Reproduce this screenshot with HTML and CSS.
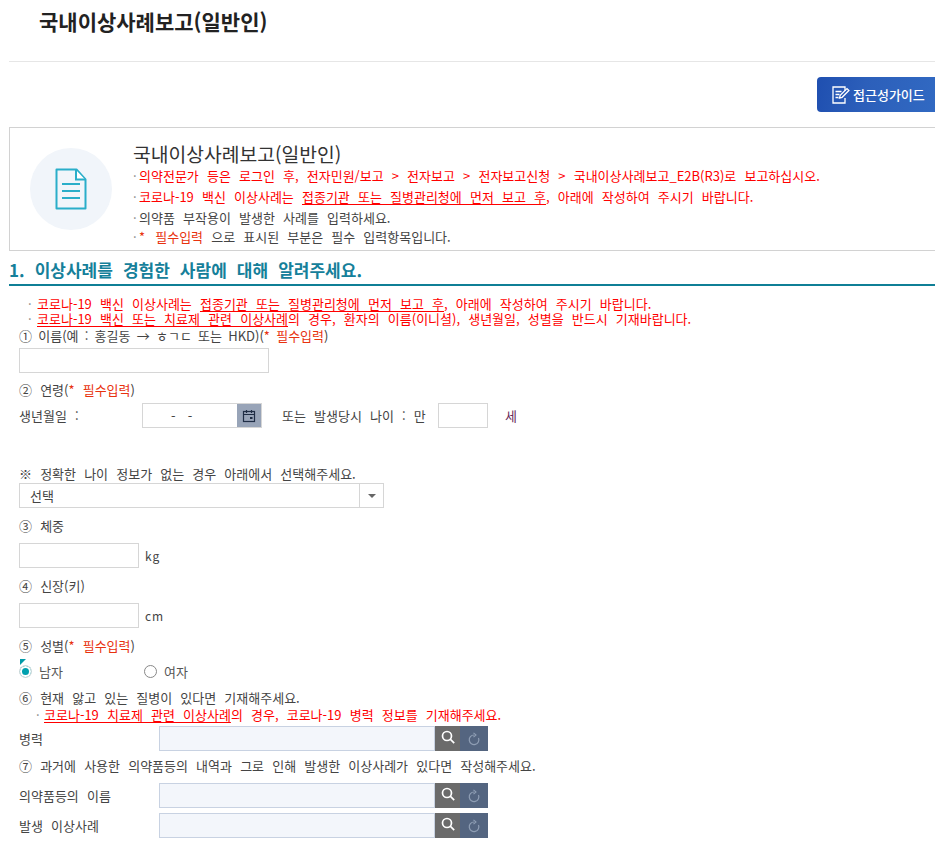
FILE: index.html
```
<!DOCTYPE html>
<html lang="ko">
<head>
<meta charset="utf-8">
<title>국내이상사례보고(일반인)</title>
<link rel="stylesheet" href="styles.css">
</head>
<body>
<div class="page">
  <header class="top"><h1>국내이상사례보고(일반인)</h1></header>
  <div class="tools">
    <a class="guide">
      <svg class="guide-icon" viewBox="0 0 20 20" width="20" height="20" fill="none" stroke="#fff" stroke-width="1.3"><path d="M14 6V2H2v16h12v-5"/><path d="M4.500 6.500h6M4.500 9.500h4M4.500 12.500h3"/><path d="M8.500 13l.7-2.600 6.800-6.800 1.900 1.900-6.800 6.800z"/></svg>
      <span>접근성가이드</span>
    </a>
  </div>
  <section class="intro">
    <div class="intro-circle">
      <svg viewBox="0 0 32 42" width="32" height="42" fill="none" stroke="#2aaec9" stroke-width="2"><path d="M1.500 1.500h20l9 10v29h-29z" stroke-linejoin="round"/><path d="M21 2v9.500h9" fill="#fff"/><path d="M7 16h18M7 23h18M7 30h18" stroke-width="2.200"/></svg>
    </div>
    <div class="intro-body">
      <h2>국내이상사례보고(일반인)</h2>
      <p class="il red"><i>·</i>의약전문가 등은 로그인 후, 전자민원/보고 &gt; 전자보고 &gt; 전자보고신청 &gt; 국내이상사례보고_E2B(R3)로 보고하십시오.</p>
      <p class="il red"><i>·</i>코로나-19 백신 이상사례는 <u>접종기관 또는 질병관리청에 먼저 보고 후</u>, 아래에 작성하여 주시기 바랍니다.</p>
      <p class="il"><i>·</i>의약품 부작용이 발생한 사례를 입력하세요.</p>
      <p class="il il-last"><i>·</i><b class="req"><span class="star">*</span> 필수입력</b> 으로 표시된 부분은 필수 입력항목입니다.</p>
    </div>
  </section>
  <h3 class="sec">1. 이상사례를 경험한 사람에 대해 알려주세요.</h3>
  <div class="form">
    <p class="note red n1"><i>·</i>코로나-19 백신 이상사례는 <u>접종기관 또는 질병관리청에 먼저 보고 후</u>, 아래에 작성하여 주시기 바랍니다.</p>
    <p class="note red n2"><i>·</i><u>코로나-19 백신 또는 치료제 관련 이상사례</u>의 경우, 환자의 이름(이니셜), 생년월일, 성별을 반드시 기재바랍니다.</p>
    <p class="lab l1">① 이름(예 : 홍길동 → ㅎㄱㄷ 또는 HKD)(<b class="req">* 필수입력</b>)</p>
    <input class="inp name" type="text" aria-label="이름">
    <p class="lab l2">② 연령(<b class="req">* 필수입력</b>)</p>
    <div class="birth">
      <span class="birth-lab">생년월일 :</span>
      <div class="date"><span class="date-val">- -</span><span class="date-btn">
        <svg viewBox="0 0 14 14" width="14" height="14" fill="none" stroke="#1f2d45" stroke-width="1.200"><rect x="1.500" y="2.500" width="11" height="10"/><path d="M1.500 5.500h11M4.500 1v3M9.500 1v3"/><rect x="8" y="8" width="2.500" height="2" fill="#1f2d45" stroke="none"/></svg></span></div>
      <span class="age-lab">또는 발생당시 나이 : 만</span>
      <input class="inp age" type="text" aria-label="나이">
      <span class="age-unit">세</span>
    </div>
    <p class="lab l3">※ 정확한 나이 정보가 없는 경우 아래에서 선택해주세요.</p>
    <div class="sel"><span class="sel-val">선택</span><span class="sel-arrow"></span></div>
    <p class="lab l4">③ 체중</p>
    <div class="unit-row"><input class="inp short" type="text" aria-label="체중"><span>kg</span></div>
    <p class="lab l5">④ 신장(키)</p>
    <div class="unit-row"><input class="inp short" type="text" aria-label="신장"><span>cm</span></div>
    <p class="lab l5">⑤ 성별(<b class="req">* 필수입력</b>)</p>
    <div class="gender">
      <span class="tri"></span>
      <label class="opt"><span class="radio on"></span>남자</label>
      <label class="opt"><span class="radio"></span>여자</label>
    </div>
    <p class="lab l6">⑥ 현재 앓고 있는 질병이 있다면 기재해주세요.</p>
    <p class="note red n3"><i>·</i><u>코로나-19 치료제 관련 이상사례</u>의 경우, 코로나-19 병력 정보를 기재해주세요.</p>
    <div class="srch s1"><span class="srch-lab">병력</span><div class="srch-in"></div><span class="b-find"><svg viewBox="0 0 14 14" width="14" height="14" fill="none" stroke="#fff" stroke-width="1.700"><circle cx="6" cy="6" r="4.500"/><path d="M9.200 9.200l4 4"/></svg></span><span class="b-reset"><svg viewBox="0 0 14 14" width="14" height="14" fill="none" stroke="#8f9eb4" stroke-width="1.200"><path d="M7 3a4.800 4.800 0 1 0 4.500 3"/><path d="M6.500 .8L9 3 6.500 5.200" stroke-width="1.100"/></svg></span></div>
    <p class="lab l7">⑦ 과거에 사용한 의약품등의 내역과 그로 인해 발생한 이상사례가 있다면 작성해주세요.</p>
    <div class="srch s2"><span class="srch-lab">의약품등의 이름</span><div class="srch-in"></div><span class="b-find"><svg viewBox="0 0 14 14" width="14" height="14" fill="none" stroke="#fff" stroke-width="1.700"><circle cx="6" cy="6" r="4.500"/><path d="M9.200 9.200l4 4"/></svg></span><span class="b-reset"><svg viewBox="0 0 14 14" width="14" height="14" fill="none" stroke="#8f9eb4" stroke-width="1.200"><path d="M7 3a4.800 4.800 0 1 0 4.500 3"/><path d="M6.500 .8L9 3 6.500 5.200" stroke-width="1.100"/></svg></span></div>
    <div class="srch s3"><span class="srch-lab">발생 이상사례</span><div class="srch-in"></div><span class="b-find"><svg viewBox="0 0 14 14" width="14" height="14" fill="none" stroke="#fff" stroke-width="1.700"><circle cx="6" cy="6" r="4.500"/><path d="M9.200 9.200l4 4"/></svg></span><span class="b-reset"><svg viewBox="0 0 14 14" width="14" height="14" fill="none" stroke="#8f9eb4" stroke-width="1.200"><path d="M7 3a4.800 4.800 0 1 0 4.500 3"/><path d="M6.500 .8L9 3 6.500 5.200" stroke-width="1.100"/></svg></span></div>
  </div>
</div>
</body>
</html>
```
FILE: styles.css
```
* { box-sizing: border-box; }
html, body { margin: 0; padding: 0; height: 851px; overflow: hidden; background: #fff; }
body { font-family: "Noto Sans CJK KR", "Noto Sans", sans-serif; font-size: 13px; color: #444; word-spacing: 4.500px; }
p, h1, h2, h3 { margin: 0; }
i { display: inline-block; font-style: normal; color: #888; }
b { font-weight: 400; }
u { text-decoration-thickness: 1px; text-underline-offset: 2px; }
.page { width: 935px; padding-left: 9px; }
.top { height: 62px; border-bottom: 1px solid #e6e6e6; padding: 5px 0 0 30px; }
.top h1 { font-size: 21px; line-height: 32px; font-weight: 700; color: #222; }
.tools { display: flex; justify-content: flex-end; padding-top: 15px; height: 65px; }
.guide { width: 118px; height: 35px; border-radius: 4px 0 0 4px; background: linear-gradient(100deg, #1f4fb0 0%, #2c5fba 40%, #3169c2 100%); color: #fff; font-size: 13px; font-weight: 500; display: flex; align-items: center; padding-left: 14px; gap: 2px; }
.intro { height: 124px; border: 1px solid #d2d2d2; border-right: 0; display: flex; padding: 20px 0 0 20px; }
.intro-circle { width: 82px; height: 82px; border-radius: 50%; background: #f1f5fa; display: flex; align-items: center; justify-content: center; flex: none; }
.intro-body { padding-left: 21px; margin-top: -6px; white-space: nowrap; }
.intro-body h2 { font-size: 19.300px; font-weight: 400; line-height: 25px; color: #333; margin-bottom: -2px; word-spacing: 0; }
.il { line-height: 21px; }
.il i { width: 6px; }
.il-last { line-height: 18px; }
.star { margin-right: 2px; }
.red { color: #f00; }
.req { color: #e8320e; }
.sec { height: 35px; border-bottom: 2px solid #0f7f96; color: #15809a; font-size: 17px; font-weight: 700; line-height: 38px; word-spacing: 5.300px; white-space: nowrap; overflow: hidden; }
.form { position: relative; padding-left: 10px; white-space: nowrap; }
.note { line-height: 16px; padding-left: 9px; }
.note i { width: 9px; }
.n1 { margin-top: 10px; }
.n2 { margin-top: -1px; }
.n3 { padding-left: 17px; }
.n3 i { width: 8px; }
.lab { line-height: 18px; }
.l1 { margin-top: 0; word-spacing: 2.600px; }
.inp { display: block; border: 1px solid #d6d6d6; background: #fff; height: 25px; padding: 0; margin: 0; }
.name { width: 250px; margin-top: 3px; }
.l2 { margin-top: 8px; }
.birth { display: flex; height: 25px; margin-top: 4px; align-items: center; }
.birth-lab { width: 123px; }
.date { width: 120px; height: 25px; border: 1px solid #d6d6d6; display: flex; align-items: center; }
.date-val { flex: 1; padding-left: 28px; letter-spacing: 2px; }
.date-btn { width: 24px; height: 23px; background: #98a4b8; display: flex; align-items: center; justify-content: center; }
.age-lab { margin-left: 20px; width: 156px; }
.age { width: 50px; }
.age-unit { margin-left: 17px; color: #6a2a5a; }
.l3 { margin-top: 37px; }
.sel { width: 365px; height: 25px; border: 1px solid #d6d6d6; margin-top: 0; display: flex; align-items: center; }
.sel-val { flex: 1; padding-left: 10px; }
.sel-arrow { width: 24px; height: 23px; border-left: 1px solid #d6d6d6; position: relative; }
.sel-arrow::after { content: ""; position: absolute; left: 8px; top: 10px; border: 4px solid transparent; border-top: 4px solid #666; }
.l4 { margin-top: 9px; }
.unit-row { display: flex; align-items: center; gap: 6px; margin-top: 8px; font-size: 12px; letter-spacing: 1px; }
.short { width: 120px; }
.l5 { margin-top: 9px; }
.gender { position: relative; display: flex; height: 24px; margin-top: 4px; align-items: center; color: #555; }
.tri { position: absolute; left: 1px; top: 0; border-top: 6px solid #009aa8; border-right: 6px solid transparent; }
.opt { display: flex; align-items: center; gap: 7px; width: 125px; }
.radio { width: 13px; height: 13px; border: 1px solid #888; border-radius: 50%; background: #fff; }
.radio.on { border: 1px solid #ddd; box-shadow: inset 0 0 0 2px #fff; background: #00a0ae; }
.l6 { margin-top: 6px; }
.srch { display: flex; height: 25px; align-items: center; }
.srch-lab { width: 140px; }
.srch-in { width: 276px; height: 25px; background: #f3f6fb; border: 1px solid #c8d2e2; }
.b-find, .b-reset { height: 25px; display: flex; align-items: center; justify-content: center; }
.b-find { width: 25px; background: #6b6b6b; padding-bottom: 3px; }
.b-reset { width: 28px; background: #546580; }
.s1 { margin-top: 3px; }
.l7 { margin-top: 6px; }
.s2 { margin-top: 8px; }
.s3 { margin-top: 5px; }
```
